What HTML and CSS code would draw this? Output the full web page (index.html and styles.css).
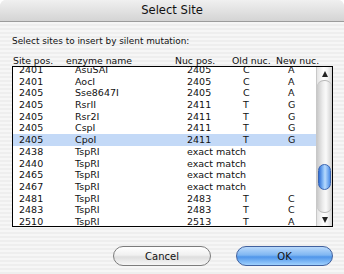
FILE: index.html
```html
<!DOCTYPE html>
<html lang="en">
<head>
    <meta charset="UTF-8">
    <title>Select Site</title>
    <link rel="stylesheet" href="styles.css">
</head>
<body>
    <div class="window">
        <div class="titlebar">Select Site</div>

        <div class="content">
            <p class="prompt">Select sites to insert by silent mutation:</p>

            <div class="head">
                <span>Site pos.</span>
                <span>enzyme name</span>
                <span>Nuc pos.</span>
                <span>Old nuc.</span>
                <span>New nuc.</span>
            </div>

            <div class="listbox">
                <div class="rows">
                    <div class="row"><span>2401</span><span>AsuSAI</span><span>2405</span><span>C</span><span>A</span></div>
                    <div class="row"><span>2401</span><span>AocI</span><span>2405</span><span>C</span><span>A</span></div>
                    <div class="row"><span>2405</span><span>Sse8647I</span><span>2405</span><span>C</span><span>A</span></div>
                    <div class="row"><span>2405</span><span>RsrII</span><span>2411</span><span>T</span><span>G</span></div>
                    <div class="row"><span>2405</span><span>Rsr2I</span><span>2411</span><span>T</span><span>G</span></div>
                    <div class="row"><span>2405</span><span>CspI</span><span>2411</span><span>T</span><span>G</span></div>
                    <div class="row selected"><span>2405</span><span>CpoI</span><span>2411</span><span>T</span><span>G</span></div>
                    <div class="row"><span>2438</span><span>TspRI</span><span class="exact">exact match</span></div>
                    <div class="row"><span>2440</span><span>TspRI</span><span class="exact">exact match</span></div>
                    <div class="row"><span>2465</span><span>TspRI</span><span class="exact">exact match</span></div>
                    <div class="row"><span>2467</span><span>TspRI</span><span class="exact">exact match</span></div>
                    <div class="row"><span>2481</span><span>TspRI</span><span>2483</span><span>T</span><span>C</span></div>
                    <div class="row"><span>2483</span><span>TspRI</span><span>2483</span><span>T</span><span>C</span></div>
                    <div class="row"><span>2510</span><span>TspRI</span><span>2513</span><span>T</span><span>A</span></div>
                </div>

                <div class="scrollbar">
                    <div class="arrow up"></div>
                    <div class="track">
                        <div class="thumb"></div>
                    </div>
                    <div class="arrow down"></div>
                </div>
            </div>

            <div class="buttons">
                <div class="button">Cancel</div>
                <div class="button default">OK</div>
            </div>
        </div>
    </div>
</body>
</html>
```

FILE: styles.css
```css
body {
    margin: 0;
    background-color: #fff;
    font-family: "DejaVu Sans", sans-serif;
    color: #111;
}

.window {
    width: 344px;
    height: 274px;
    border-radius: 6px 6px 0 0;
    overflow: hidden;
    background: repeating-linear-gradient(#eeeeee 0, #eeeeee 2px, #f6f6f6 2px, #f6f6f6 4px);
}

.titlebar {
    height: 21px;
    line-height: 21px;
    text-align: center;
    font-size: 11.6px;
    background: linear-gradient(#f0f0f0, #d4d4d4);
    border-bottom: 1px solid #9c9c9c;
}

.content {
    padding: 13px 11px 0 12px;
}

.prompt {
    margin: 0;
    font-size: 8.9px;
    line-height: 12px;
}

.head {
    display: grid;
    grid-template-columns: 53px 109px 57px 44px 1fr;
    margin-top: 9px;
    padding-left: 1px;
    font-size: 9.3px;
    line-height: 10px;
}

.listbox {
    display: flex;
    height: 159px;
    border: 1px solid #000;
    background-color: #fff;
    overflow: hidden;
}

.rows {
    flex: 1;
    margin-top: -3px;
}

.row {
    display: grid;
    grid-template-columns: 56px 112px 56px 45px 1fr;
    height: 11.7px;
    line-height: 11.7px;
    padding-left: 6px;
    font-size: 9.5px;
}

.row.selected {
    background-color: #c3d9f7;
}

.exact {
    grid-column: 3 / 6;
}

/* aqua style scroller */
.scrollbar {
    width: 15px;
    display: flex;
    flex-direction: column;
    border-left: 1px solid #c8c8c8;
    background: linear-gradient(to right, #e4e4e4, #ffffff 45%, #f4f4f4 70%, #d6d6d6);
}

.arrow {
    height: 13px;
    display: flex;
    align-items: center;
    justify-content: center;
}

.arrow.up::before {
    content: "";
    border-left: 3.5px solid transparent;
    border-right: 3.5px solid transparent;
    border-bottom: 6px solid #222;
}

.arrow.down::before {
    content: "";
    border-left: 3.5px solid transparent;
    border-right: 3.5px solid transparent;
    border-top: 6px solid #222;
}

.track {
    flex: 1;
    border-radius: 7px;
    border-top: 1px solid #b8b8b8;
    border-bottom: 1px solid #b8b8b8;
    background: linear-gradient(to right, #c8c8c8, #eeeeee 40%, #fafafa 60%, #cfcfcf);
}

.thumb {
    width: 13px;
    height: 26px;
    margin: 83px auto 0;
    border-radius: 7px;
    border: 1px solid #3a64b0;
    box-sizing: border-box;
    background: linear-gradient(to right, #2f6fd6, #8ec0f8 40%, #b8dafd 55%, #4d8ee8);
}

.buttons {
    display: flex;
    justify-content: flex-end;
    gap: 25px;
    margin-top: 19px;
}

.button {
    width: 98px;
    height: 20px;
    line-height: 19px;
    box-sizing: border-box;
    text-align: center;
    font-size: 10px;
    border-radius: 10px;
    border: 1px solid #7c7c7c;
    background: linear-gradient(#ffffff, #f0f0f0 45%, #dedede 55%, #f6f6f6);
}

.button.default {
    width: 97px;
    border-color: #40609e;
    background: linear-gradient(#b9d9fb, #7fb6f2 45%, #4f95ea 55%, #9ed0fd);
}
```
